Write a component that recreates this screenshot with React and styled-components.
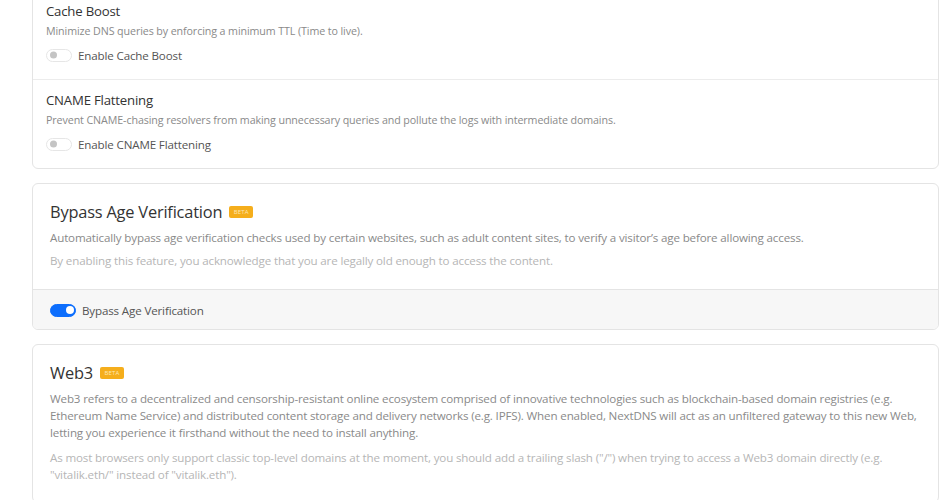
import React from "react";
import styled, { createGlobalStyle } from "styled-components";

const Global = createGlobalStyle`
  html, body { margin: 0; padding: 0; background: #fff; }
  body { font-family: "Open Sans", "Noto Sans", sans-serif; color: #333; overflow: hidden; }
`;

const Page = styled.div`
  padding: 0 11px 0 32px;
  display: flex;
  flex-direction: column;
  gap: 14px;
`;

const Card = styled.div`
  border: 1px solid #e4e4e4;
  border-radius: 6px;
  background: #fff;
  overflow: hidden;
  margin-top: ${(p) => p.$offset || 0}px;
`;

const Section = styled.div`
  padding: 10px 13px 16px;
  & + & { border-top: 1px solid #ececec; }
`;

const SmallTitle = styled.div`
  font-size: 13.2px;
  line-height: 20px;
  font-weight: 500;
  color: #333;
  letter-spacing: -0.2px;
`;

const SmallDesc = styled.div`
  margin-top: 2px;
  font-size: 10.7px;
  line-height: 16px;
  color: #8a8a8a;
  letter-spacing: -0.1px;
`;

const ToggleRow = styled.label`
  margin-top: ${(p) => p.$mt ?? 8}px;
  display: flex;
  align-items: center;
  gap: 6px;
  height: 16px;
  font-size: 11.6px;
  color: #555;
  letter-spacing: -0.15px;
`;

const Switch = styled.span`
  position: relative;
  width: 26px;
  height: 13px;
  border-radius: 7px;
  box-sizing: border-box;
  flex: none;
  background: ${(p) => (p.$on ? "#0d6efd" : "#fff")};
  border: 1px solid ${(p) => (p.$on ? "#0d6efd" : "#e6e6e6")};
  &::after {
    content: "";
    position: absolute;
    top: 50%;
    transform: translateY(-50%);
    left: ${(p) => (p.$on ? "15px" : "3px")};
    width: ${(p) => (p.$on ? "8px" : "7px")};
    height: ${(p) => (p.$on ? "8px" : "7px")};
    border-radius: 50%;
    background: ${(p) => (p.$on ? "#fff" : "#c4c4c4")};
  }
`;

const Body = styled.div`
  padding: 16px 17px 19px;
`;

const TitleRow = styled.div`
  display: flex;
  align-items: center;
  gap: 7px;
  height: 24px;
`;

const BigTitle = styled.h2`
  margin: 0;
  font-size: 16.4px;
  line-height: 24px;
  font-weight: 500;
  color: #333;
  letter-spacing: -0.2px;
`;

const Badge = styled.span`
  display: inline-flex;
  align-items: center;
  justify-content: center;
  width: 24px;
  height: 12px;
  border-radius: 2px;
  background: #f5ae1c;
  color: #fde7b4;
  font-size: 6px;
  letter-spacing: 0.2px;
  font-weight: 500;
`;

const Para = styled.p`
  margin: ${(p) => p.$mt}px 0 0;
  font-size: 11.6px;
  line-height: ${(p) => p.$lh || 18}px;
  color: ${(p) => (p.$muted ? "#b6b6b6" : "#8a8a8a")};
  letter-spacing: -0.15px;
`;

const Footer = styled.div`
  border-top: 1px solid #e4e4e4;
  background: #f7f7f7;
  padding: 12px 17px 11px;
`;

export default function App() {
  return (
    <>
      <Global />
      <Page>
        <Card $offset={-10}>
          <Section>
            <SmallTitle>Cache Boost</SmallTitle>
            <SmallDesc>Minimize DNS queries by enforcing a minimum TTL (Time to live).</SmallDesc>
            <ToggleRow>
              <Switch />
              Enable Cache Boost
            </ToggleRow>
          </Section>
          <Section>
            <SmallTitle>CNAME Flattening</SmallTitle>
            <SmallDesc>
              Prevent CNAME-chasing resolvers from making unnecessary queries and pollute the logs with intermediate domains.
            </SmallDesc>
            <ToggleRow>
              <Switch />
              Enable CNAME Flattening
            </ToggleRow>
          </Section>
        </Card>

        <Card>
          <Body>
            <TitleRow>
              <BigTitle>Bypass Age Verification</BigTitle>
              <Badge>BETA</Badge>
            </TitleRow>
            <Para $mt={5}>
              Automatically bypass age verification checks used by certain websites, such as adult content sites, to verify a visitor’s age before allowing access.
            </Para>
            <Para $mt={5} $muted>
              By enabling this feature, you acknowledge that you are legally old enough to access the content.
            </Para>
          </Body>
          <Footer>
            <ToggleRow $mt={0}>
              <Switch $on />
              Bypass Age Verification
            </ToggleRow>
          </Footer>
        </Card>

        <Card>
          <Body>
            <TitleRow>
              <BigTitle>Web3</BigTitle>
              <Badge>BETA</Badge>
            </TitleRow>
            <Para $mt={5} $lh={17}>
              Web3 refers to a decentralized and censorship-resistant online ecosystem comprised of innovative technologies such as blockchain-based domain registries (e.g. Ethereum Name Service) and distributed content storage and delivery networks (e.g. IPFS). When enabled, NextDNS will act as an unfiltered gateway to this new Web, letting you experience it firsthand without the need to install anything.
            </Para>
            <Para $mt={8} $lh={17} $muted>
              As most browsers only support classic top-level domains at the moment, you should add a trailing slash ("/") when trying to access a Web3 domain directly (e.g. "vitalik.eth/" instead of "vitalik.eth").
            </Para>
          </Body>
        </Card>
      </Page>
    </>
  );
}
